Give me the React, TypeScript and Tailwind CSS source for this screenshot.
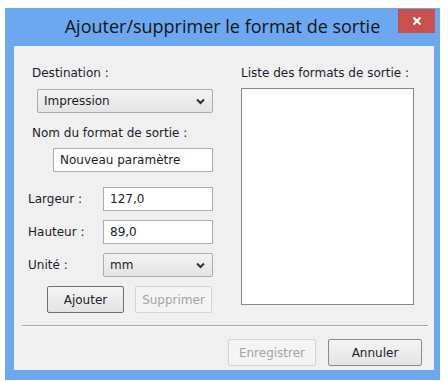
import React from "react"

const ui = { fontFamily: '"DejaVu Sans", "Liberation Sans", sans-serif' }

function Chevron() {
  return (
    <svg width="9" height="7" viewBox="0 0 9 7" className="shrink-0">
      <polyline points="1,1.5 4.5,5 8,1.5" fill="none" stroke="#303030" strokeWidth="2" />
    </svg>
  )
}

function Select({ value, className }: { value: string; className: string }) {
  return (
    <div
      className={
        "flex h-[24px] items-center justify-between rounded-[2px] border border-[#acacac] bg-gradient-to-b from-[#f3f3f3] to-[#e4e4e4] pl-[6px] pr-[7px] " +
        className
      }
    >
      <span>{value}</span>
      <Chevron />
    </div>
  )
}

function Field({ value, className }: { value: string; className: string }) {
  return (
    <div className={"flex h-[24px] items-center border border-[#abadb3] bg-white pl-[6px] " + className}>
      {value}
    </div>
  )
}

function Button({ label, disabled, className }: { label: string; disabled?: boolean; className: string }) {
  return (
    <div
      className={
        "flex h-[27px] items-center justify-center rounded-[2px] border " +
        (disabled
          ? "border-[#d5d5d5] bg-[#f4f4f4] text-[#a3a3a3] "
          : "border-[#8a8a8a] bg-gradient-to-b from-[#f4f4f4] to-[#e3e3e3] text-[#1c1c2c] ") +
        className
      }
    >
      {label}
    </div>
  )
}

export default function App() {
  return (
    <div className="h-[381px] w-[448px] bg-white pl-[5px] pt-[8px]">
      <div className="flex h-[372px] w-[435px] flex-col bg-[#6ca8ef]">
        <div className="grid h-[38px] grid-cols-[1fr_auto_1fr]">
          <div />
          <div
            className="pt-[6px] text-[18px] leading-[24px] text-[#151515]"
            style={{ fontFamily: '"Open Sans", "Noto Sans", sans-serif' }}
          >
            Ajouter/supprimer le format de sortie
          </div>
          <div className="flex justify-end pr-[5px] pt-[1px]">
            <div className="flex h-[24px] w-[37px] items-center justify-center bg-[#c9504c]">
              <svg width="10" height="10" viewBox="0 0 10 10">
                <path d="M1.5 1.5 L8.5 8.5 M8.5 1.5 L1.5 8.5" stroke="#fff" strokeWidth="2.2" />
              </svg>
            </div>
          </div>
        </div>

        <div
          className="ml-[9px] h-[324px] w-[420px] bg-[#f0f0f0] text-[12px] leading-[16px] text-[#1c1c2c]"
          style={ui}
        >
          <div className="flex items-start pt-[19px]">
            <div className="flex w-[199px] flex-col">
              <div className="ml-[18px]">Destination :</div>
              <Select value="Impression" className="ml-[23px] mt-[8px] w-[176px]" />
              <div className="ml-[18px] mt-[12px]">Nom du format de sortie :</div>
              <Field value="Nouveau paramètre" className="ml-[39px] mt-[7px] w-[160px]" />

              <div className="mt-[15px] flex items-center">
                <div className="ml-[14px] w-[75px]">Largeur :</div>
                <Field value="127,0" className="w-[110px]" />
              </div>
              <div className="mt-[9px] flex items-center">
                <div className="ml-[14px] w-[75px]">Hauteur :</div>
                <Field value="89,0" className="w-[110px]" />
              </div>
              <div className="mt-[9px] flex items-center">
                <div className="ml-[14px] w-[75px]">Unité :</div>
                <Select value="mm" className="w-[110px]" />
              </div>

              <div className="mt-[9px] flex gap-[11px] pl-[33px]">
                <Button label="Ajouter" className="w-[77px] border-[#707070]" />
                <Button label="Supprimer" disabled className="w-[77px]" />
              </div>
            </div>

            <div className="ml-[28px] flex flex-col">
              <div>Liste des formats de sortie :</div>
              <div className="mt-[7px] h-[217px] w-[173px] border border-[#828790] bg-white" />
            </div>
          </div>

          <div className="ml-[8px] mt-[12px] w-[406px] border-b border-t border-b-white border-t-[#a8a8a8]" />

          <div className="mt-[12px] flex gap-[12px] pl-[214px]">
            <Button label="Enregistrer" disabled className="w-[88px]" />
            <Button label="Annuler" className="w-[94px]" />
          </div>
        </div>
      </div>
    </div>
  )
}
